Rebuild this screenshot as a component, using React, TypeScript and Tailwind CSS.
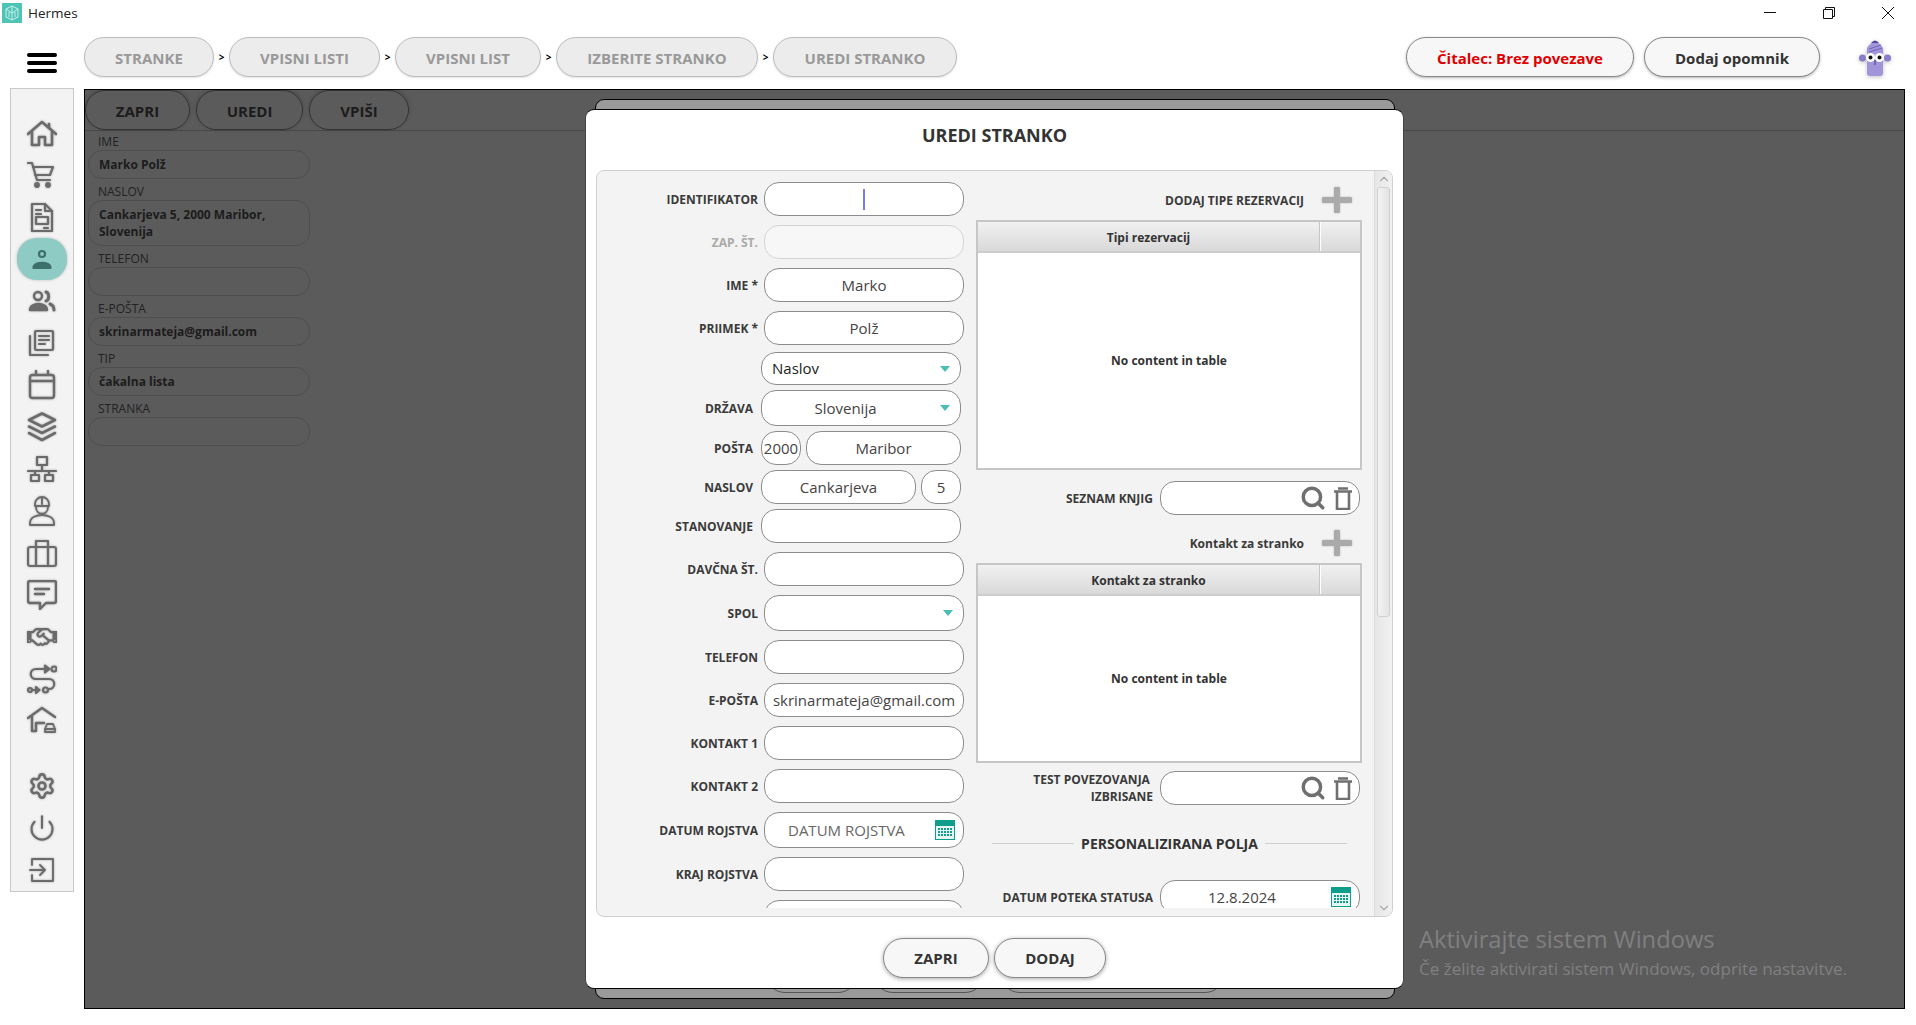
import React from 'react';
import { Search, Settings, Power, ChevronUp, ChevronDown } from 'lucide-react';
import { FaRegHandshake } from 'react-icons/fa';

const Ico: React.FC<{ w?: number; children: React.ReactNode }> = ({ w = 2.2, children }) => (
  <svg width="30" height="30" viewBox="0 0 30 30" fill="none" stroke="currentColor" strokeWidth={w} strokeLinejoin="round" strokeLinecap="round">
    {children}
  </svg>
);

const sideTop: { key: string; node: React.ReactNode; active?: boolean }[] = [
  { key: 'home', node: <Ico w={2.6}><path d="M1 16 15 4l14 12" /><path d="M5 14v13h7v-8h6v8h7V14" /><path d="M22 6v4" /></Ico> },
  { key: 'cart', node: <Ico><path d="M1 3h4l5 17h13" /><path d="M6 7h20l-3 8H8" /><circle cx="10" cy="25" r="1.8" fill="currentColor" /><circle cx="21" cy="25" r="1.8" fill="currentColor" /></Ico> },
  { key: 'doc', node: <Ico><path d="M5 2h13l7 7v20H5z" /><path d="M18 2v7h7" /><path d="M9 8h5M9 12h5M17 26h4" /><rect x="9" y="15" width="12" height="7" /></Ico> },
  { key: 'person', active: true, node: <Ico><circle cx="15" cy="10" r="3" /><path d="M6.5 24c0-7 17-7 17 0z" fill="currentColor" /></Ico> },
  { key: 'people', node: <Ico w={2.4}><circle cx="11" cy="10" r="4" /><path d="M3 24c0-8 17-8 17 0z" fill="currentColor" /><path d="M19 6c3.500 1 3.500 8 0 9" strokeWidth="3" /><path d="M23 18c2.500 1 4 3 4 6" strokeWidth="3" /></Ico> },
  { key: 'docs', node: <Ico><rect x="8" y="3" width="18" height="19" rx="1" /><path d="M12 8h10M12 12h10M12 16h6" /><path d="M3 8v19h18" /></Ico> },
  { key: 'calendar', node: <Ico w={2.4}><rect x="3" y="5" width="24" height="23" rx="2.500" /><path d="M3 11h24M9 1v4M21 1v4" /></Ico> },
  { key: 'layers', node: <Ico w={2.6}><path d="M15 1.500l13 6.500-13 6.500L2 8z" /><path d="M2 14.500l13 6.500 13-6.500" /><path d="M2 21l13 7 13-7" /></Ico> },
  { key: 'network', node: <Ico><rect x="10" y="3" width="10" height="8" /><path d="M15 11v6M1 17h28M8 17v4M22 17v4" /><rect x="4" y="21" width="8" height="6" /><rect x="18" y="21" width="8" height="6" /></Ico> },
  { key: 'worker', node: <Ico w={1.9}><path d="M8 10V8a7 7 0 0 1 14 0v2z" /><path d="M9 11c0 9 12 9 12 0M15 2v6" /><path d="M3 29v-2c0-6 7-8 12-8s12 2 12 8v2z" /></Ico> },
  { key: 'briefcase', node: <Ico><rect x="1" y="9" width="28" height="19" rx="2" /><path d="M9 9V3h12v6M9 9v19M21 9v19" /></Ico> },
  { key: 'chat', node: <Ico w={2.4}><path d="M3 1h24q2 0 2 2v18q0 2-2 2h-8l-6 6v-6H3q-2 0-2-2V3q0-2 2-2z" /><path d="M8 9h14M8 14h9" /></Ico> },
  { key: 'handshake', node: <FaRegHandshake size={30} /> },
  { key: 'route', node: <Ico><path d="M18 5H9c-7 0-7 10 0 10h13c7 0 7 10 0 10h-1" /><path d="M18 1.500l4.500 3.500-4.500 3.500z" fill="currentColor" /><circle cx="27" cy="5" r="2.500" /><circle cx="18.500" cy="26" r="2.500" /><circle cx="3" cy="26" r="2" /><path d="M5 26h7" /><path d="M9 23l3.500 3-3.500 3z" fill="currentColor" /></Ico> },
  { key: 'housecar', node: <Ico w={2.4}><path d="M1 12 15 2l13 9" /><path d="M5 10v15h4v-8h8" /><path d="M18 23l2-5h6l2 5v3H18z" strokeWidth="1.800" /><path d="M18 23h10" strokeWidth="1.800" /></Ico> },
];

const sideBottom: { key: string; node: React.ReactNode }[] = [
  { key: 'gear', node: <Settings size={28} strokeWidth={2.2} /> },
  { key: 'power', node: <Power size={28} strokeWidth={1.8} /> },
  { key: 'exit', node: <Ico w={1.9}><path d="M5 10V4h21v22H5v-6" /><path d="M3 15h15M13 10l5 5-5 5" /></Ico> },
];

const Sidebar: React.FC = () => (
  <div className="ml-[10px] -mt-px mr-[10px] flex h-[804px] w-[64px] shrink-0 flex-col items-center border border-[#c8c8c8] bg-[#f3f3f3] pt-[23px] text-[#6b6b6b]">
    {sideTop.map(i => (
      <div key={i.key} className={i.active
        ? 'flex h-[42px] w-[50px] items-center justify-center rounded-[20px] bg-[#8ecbc4] text-[#3d6f6b] shadow-[0_0_3px_rgba(0,0,0,0.25)]'
        : 'flex h-[42px] w-[50px] items-center justify-center drop-shadow-[0_0_1px_rgba(0,0,0,0.3)]'}>
        {i.node}
      </div>
    ))}
    <div className="h-[23px] shrink-0" />
    {sideBottom.map(i => (
      <div key={i.key} className="flex h-[42px] w-[50px] items-center justify-center drop-shadow-[0_0_1px_rgba(0,0,0,0.3)]">{i.node}</div>
    ))}
  </div>
);

const Crumb: React.FC<{ label: string; w: string }> = ({ label, w }) => (
  <div className={`flex h-[40px] items-center justify-center rounded-[20px] border border-[#bdbdbd] bg-[#ececec] pt-[2px] text-[15px] font-bold text-[#999] shadow-[0_1px_2px_rgba(0,0,0,0.12)] ${w}`}>
    {label}
  </div>
);

const Sep: React.FC = () => (
  <span className="flex h-[40px] w-[15px] items-center justify-center text-[10px] font-bold text-black">&gt;</span>
);

const Avatar: React.FC = () => (
  <svg width="32" height="37" viewBox="0 0 32 37" className="ml-[39px] mt-[2px] drop-shadow-[0_1px_2px_rgba(0,0,0,0.25)]">
    <path d="M8 9 Q16 -3 24 9 V34 Q24 37 21 37 H11 Q8 37 8 34z" fill="#a194d9" />
    <path d="M12 4 Q16 -1 20 4z" fill="#56479c" />
    <path d="M10 10 L22 6 M10 13 L23 9" stroke="#7464b8" strokeWidth="1" />
    <circle cx="3.500" cy="19" r="3.500" fill="#8a7cc9" />
    <circle cx="28.500" cy="19" r="3.500" fill="#8a7cc9" />
    <circle cx="11.500" cy="18.500" r="4.500" fill="#fff" />
    <circle cx="20.500" cy="18.500" r="4.500" fill="#fff" />
    <circle cx="11.500" cy="18.500" r="2" fill="#111" />
    <circle cx="20.500" cy="18.500" r="2" fill="#111" />
    <path d="M16 21v5" stroke="#4a3d8a" strokeWidth="1" />
  </svg>
);

const Header: React.FC = () => (
  <div className="flex h-[59px] items-start pt-[7px]">
    <div className="ml-[27px] mr-[27px] mt-[16px] flex w-[30px] flex-col gap-[4px]">
      <div className="h-[4px] rounded-full bg-black" />
      <div className="h-[4px] rounded-full bg-black" />
      <div className="h-[4px] rounded-full bg-black" />
    </div>
    <Crumb label="STRANKE" w="w-[130px]" />
    <Sep />
    <Crumb label="VPISNI LISTI" w="w-[151px]" />
    <Sep />
    <Crumb label="VPISNI LIST" w="w-[146px]" />
    <Sep />
    <Crumb label="IZBERITE STRANKO" w="w-[202px]" />
    <Sep />
    <Crumb label="UREDI STRANKO" w="w-[184px]" />
    <div className="ml-auto flex h-[40px] w-[228px] items-center justify-center rounded-[20px] border border-[#888] bg-[#f7f7f7] pt-[2px] text-[15px] font-bold text-[#e00000] shadow-[0_1px_3px_rgba(0,0,0,0.3)]">
      Čitalec: Brez povezave
    </div>
    <div className="ml-[10px] flex h-[40px] w-[176px] items-center justify-center rounded-[20px] border border-[#888] bg-[#f7f7f7] pt-[2px] text-[15px] font-bold text-[#333] shadow-[0_1px_3px_rgba(0,0,0,0.3)]">
      Dodaj opomnik
    </div>
    <Avatar />
    <div className="w-[25px]" />
  </div>
);

const TitleBar: React.FC = () => (
  <div className="flex h-[30px] items-start">
    <div className="ml-[2px] mt-[3px] flex h-[20px] w-[20px] items-center justify-center bg-[#4dc4b6]">
      <svg width="16" height="16" viewBox="0 0 16 16" fill="none" stroke="#d8f5f0" strokeWidth="0.900">
        <path d="M8 1l6 3v8l-6 3-6-3V4z" />
        <path d="M8 1v14M2 4l6 4 6-4M5 7v5M11 7v5" />
      </svg>
    </div>
    <span className="ml-[6px] mt-[3px] text-[13.5px] leading-[20px] text-[#222]">Hermes</span>
    <div className="ml-auto mr-[22px] mt-[7px] flex gap-[47px]">
      <svg width="12" height="12" viewBox="0 0 12 12" stroke="#111" fill="none"><path d="M0 5.500h12" /></svg>
      <svg width="12" height="12" viewBox="0 0 12 12" stroke="#111" fill="none"><path d="M.5 2.500h9v9h-9zM2.500 2.500v-2h9v9h-2" /></svg>
      <svg width="12" height="12" viewBox="0 0 12 12" stroke="#111" fill="none"><path d="M0 0l12 12M12 0L0 12" /></svg>
    </div>
  </div>
);

const DetailLabel: React.FC<{ text: string }> = ({ text }) => (
  <div className="h-[21px] pl-[10px] pt-[4px] text-[12px] leading-[17px] text-[#222]">{text}</div>
);

const DetailField: React.FC<{ tall?: boolean; children?: React.ReactNode }> = ({ tall, children }) => (
  <div className={`rounded-[14px] border border-[#4e4e4e] px-[10px] text-[12px] font-bold text-[#1c1c1c] ${tall ? 'h-[46px] py-[5px] leading-[17px]' : 'h-[29px] leading-[27px]'}`}>
    {children}
  </div>
);

const TopBtn: React.FC<{ label: string; w: string }> = ({ label, w }) => (
  <div className={`flex h-[40px] items-center justify-center rounded-[20px] border border-[#333] pt-[2px] text-[15px] font-bold text-[#1c1c1c] shadow-[0_-1px_4px_rgba(0,0,0,0.2)] ${w}`}>
    {label}
  </div>
);

const Caret: React.FC = () => <div className="h-0 w-0 border-x-[5px] border-t-[6px] border-x-transparent border-t-[#4cbdb3]" />;

const CalendarIcon: React.FC = () => (
  <svg width="20" height="20" viewBox="0 0 20 20" className="shrink-0">
    <rect x="0" y="0" width="20" height="20" fill="#0f9d8c" />
    <rect x="1" y="6" width="18" height="13" fill="#e4f5f2" />
    {[8, 11, 14].map(y => [3, 6, 9, 12, 15].map(x => (
      <rect key={`${x}-${y}`} x={x} y={y} width="2" height="2" fill="#0f9d8c" />
    )))}
  </svg>
);

const Field: React.FC<{ w?: string; h?: string; muted?: boolean; children?: React.ReactNode; className?: string }> = ({ w = 'w-[200px]', h = 'h-[34px]', muted, children, className = 'justify-center' }) => (
  <div className={`flex shrink-0 items-center rounded-[15px] border text-[15px] text-[#444] ${w} ${h} ${muted ? 'border-[#d4d4d4] bg-[#f7f7f7]' : 'border-[#8c8c8c] bg-white'} ${className}`}>
    {children}
  </div>
);

const Lbl: React.FC<{ muted?: boolean; children: React.ReactNode }> = ({ muted, children }) => (
  <span className={`text-right text-[12px] font-bold leading-[17px] ${muted ? 'text-[#aaa]' : 'text-[#3a3a3a]'}`}>{children}</span>
);

const RowA: React.FC<{ label?: string; muted?: boolean; children: React.ReactNode }> = ({ label, muted, children }) => (
  <div className="flex items-center justify-end gap-[6px]">
    {label && <Lbl muted={muted}>{label}</Lbl>}
    {children}
  </div>
);

const RowB: React.FC<{ label?: string; children: React.ReactNode }> = ({ label, children }) => (
  <div className="flex items-center justify-end gap-[8px] pr-[3px]">
    {label && <Lbl>{label}</Lbl>}
    {children}
  </div>
);

const Select: React.FC<{ h?: string; text?: string; left?: boolean }> = ({ h = 'h-[33px]', text, left }) => (
  <Field h={h} className="justify-between pl-[10px] pr-[10px]">
    <span className={left ? 'text-[#222]' : 'flex-1 pr-[21px] text-center'}>{text}</span>
    <Caret />
  </Field>
);

const LeftColumn: React.FC = () => (
  <div className="w-[367px] shrink-0 pt-[11px]">
    <div className="flex flex-col gap-[9px]">
      <RowA label="IDENTIFIKATOR"><Field><div className="h-[21px] w-[2px] bg-[#7b7bea]" /></Field></RowA>
      <RowA label="ZAP. ŠT." muted><Field muted /></RowA>
      <RowA label="IME  *"><Field>Marko</Field></RowA>
      <RowA label="PRIIMEK *"><Field>Polž</Field></RowA>
    </div>
    <div className="mt-[7px] flex flex-col gap-[5px]">
      <RowB><Select text="Naslov" left /></RowB>
      <RowB label="DRŽAVA"><Select h="h-[36px]" text="Slovenija" /></RowB>
      <RowB label="POŠTA">
        <div className="flex w-[200px] gap-[5px]">
          <Field w="w-[40px]">2000</Field>
          <Field w="w-[155px]">Maribor</Field>
        </div>
      </RowB>
      <RowB label="NASLOV">
        <div className="flex w-[200px] gap-[5px]">
          <Field w="w-[155px]">Cankarjeva</Field>
          <Field w="w-[40px]">5</Field>
        </div>
      </RowB>
      <RowB label="STANOVANJE"><Field /></RowB>
    </div>
    <div className="mt-[9px] flex flex-col gap-[9px]">
      <RowA label="DAVČNA ŠT."><Field /></RowA>
      <RowA label="SPOL"><Select h="h-[36px]" /></RowA>
      <RowA label="TELEFON"><Field /></RowA>
      <RowA label="E-POŠTA"><Field>skrinarmateja@gmail.com</Field></RowA>
      <RowA label="KONTAKT 1"><Field /></RowA>
      <RowA label="KONTAKT 2"><Field /></RowA>
      <RowA label="DATUM ROJSTVA">
        <Field h="h-[36px]" className="justify-between pl-[23px] pr-[8px]">
          <span className="text-[#666]">DATUM ROJSTVA</span>
          <CalendarIcon />
        </Field>
      </RowA>
      <RowA label="KRAJ ROJSTVA"><Field /></RowA>
      <RowA><Field /></RowA>
    </div>
  </div>
);

const PlusRow: React.FC<{ label: string; mt: string }> = ({ label, mt }) => (
  <div className={`flex h-[26px] items-center justify-end gap-[18px] pr-[10px] ${mt}`}>
    <Lbl>{label}</Lbl>
    <svg width="30" height="26" viewBox="0 0 30 26" className="drop-shadow-[0_0_1px_rgba(0,0,0,0.2)]">
      <path d="M2 13h26M15 2v22" stroke="#aaa" strokeWidth="6" strokeLinecap="round" />
    </svg>
  </div>
);

const EmptyTable: React.FC<{ title: string; h: string; mt: string }> = ({ title, h, mt }) => (
  <div className={`flex flex-col border-2 border-[#c6c6c6] bg-white ${h} ${mt}`}>
    <div className="flex h-[31px] shrink-0 border-b-2 border-[#cdcdcd] bg-gradient-to-b from-[#f1f1f1] to-[#d9d9d9] text-[12px] font-bold text-[#333]">
      <div className="flex flex-1 items-center justify-center border-r border-[#c6c6c6] pt-[2px]">{title}</div>
      <div className="w-[40px] border-l border-white" />
    </div>
    <div className="flex flex-1 items-center justify-center pt-[1px] text-[12px] font-bold text-[#333]">No content in table</div>
  </div>
);

const TrashIcon: React.FC = () => (
  <svg width="18" height="23" viewBox="0 0 18 23" fill="none" stroke="#6f6f6f" strokeWidth="2.600">
    <path d="M0 4.500h18M4 1.500h10" />
    <path d="M3 5v17h12V5" />
  </svg>
);

const LookupField: React.FC = () => (
  <Field className="justify-end gap-[8px] pr-[7px]">
    <Search size={26} strokeWidth={3.2} className="text-[#6f6f6f]" />
    <TrashIcon />
  </Field>
);

const RightColumn: React.FC = () => (
  <div className="ml-[12px] w-[386px] shrink-0">
    <PlusRow label="DODAJ TIPE REZERVACIJ" mt="mt-[16px]" />
    <EmptyTable title="Tipi rezervacij" h="h-[250px]" mt="mt-[7px]" />
    <div className="mt-[11px] flex items-center justify-end gap-[7px] pr-[2px]">
      <Lbl>SEZNAM KNJIG</Lbl>
      <LookupField />
    </div>
    <PlusRow label="Kontakt za stranko" mt="mt-[15px]" />
    <EmptyTable title="Kontakt za stranko" h="h-[200px]" mt="mt-[7px]" />
    <div className="mt-[8px] flex items-center justify-end gap-[7px] pr-[2px]">
      <Lbl>TEST POVEZOVANJA&nbsp;<br />IZBRISANE</Lbl>
      <LookupField />
    </div>
    <div className="mt-[28px] flex h-[20px] items-center justify-between pl-[16px] pr-[15px]">
      <div className="h-px w-[82px] bg-[#cfcfcf]" />
      <span className="text-[14px] font-bold text-[#333]">PERSONALIZIRANA POLJA</span>
      <div className="h-px w-[82px] bg-[#cfcfcf]" />
    </div>
    <div className="mt-[27px] flex items-center justify-end gap-[7px] pr-[2px]">
      <Lbl>DATUM POTEKA STATUSA</Lbl>
      <Field className="justify-between pl-[47px] pr-[8px]">
        <span className="text-[#444]">12.8.2024</span>
        <CalendarIcon />
      </Field>
    </div>
  </div>
);

const ScrollTrack: React.FC = () => (
  <div className="flex w-[18px] shrink-0 flex-col items-center border-l border-[#dcdcdc] bg-gradient-to-r from-[#e6e6e6] to-[#f1f1f1]">
    <div className="flex h-[16px] items-center justify-center text-[#aaa]"><ChevronUp size={14} /></div>
    <div className="h-[430px] w-[13px] rounded-[3px] border border-[#d0d0d0] bg-gradient-to-r from-[#f2f2f2] to-[#e4e4e4]" />
    <div className="flex-1" />
    <div className="flex h-[16px] items-center justify-center text-[#aaa]"><ChevronDown size={14} /></div>
  </div>
);

const ModalBtn: React.FC<{ label: string; w: string }> = ({ label, w }) => (
  <div className={`flex h-[40px] items-center justify-center rounded-[20px] border border-[#888] bg-[#f7f7f7] text-[15px] font-bold text-[#333] shadow-[0_1px_4px_rgba(0,0,0,0.35)] ${w}`}>
    {label}
  </div>
);

const Modal: React.FC = () => (
  <div className="absolute left-[500px] top-[19px] flex h-[880px] w-[819px] flex-col rounded-[9px] border-y border-y-black border-x border-x-[#444] bg-white">
    <div className="flex h-[60px] shrink-0 items-center justify-center pb-[10px] text-[18px] font-bold text-[#333]">UREDI STRANKO</div>
    <div className="mx-[10px] flex h-[747px] shrink-0 overflow-hidden rounded-[8px] border border-[#d0d0d0] bg-[#f3f3f3]">
      <div className="flex h-[737px] flex-1 overflow-hidden">
        <LeftColumn />
        <RightColumn />
      </div>
      <ScrollTrack />
    </div>
    <div className="flex justify-center gap-[5px] pt-[21px]">
      <ModalBtn label="ZAPRI" w="w-[106px]" />
      <ModalBtn label="DODAJ" w="w-[112px]" />
    </div>
  </div>
);

const MainPanel: React.FC = () => (
  <div className="relative h-[920px] w-[1821px] shrink-0 overflow-hidden border border-black bg-[#5b5b5b]">
    <div className="flex h-[41px] gap-[6px] border-b border-[#484848]">
      <TopBtn label="ZAPRI" w="w-[105px]" />
      <TopBtn label="UREDI" w="w-[107px]" />
      <TopBtn label="VPIŠI" w="w-[100px]" />
    </div>
    <div className="-mt-[2px] ml-[3px] w-[222px]">
      <DetailLabel text="IME" />
      <DetailField>Marko Polž</DetailField>
      <DetailLabel text="NASLOV" />
      <DetailField tall>Cankarjeva 5, 2000 Maribor, Slovenija</DetailField>
      <DetailLabel text="TELEFON" />
      <DetailField />
      <DetailLabel text="E-POŠTA" />
      <DetailField>skrinarmateja@gmail.com</DetailField>
      <DetailLabel text="TIP" />
      <DetailField>čakalna lista</DetailField>
      <DetailLabel text="STRANKA" />
      <DetailField />
    </div>

    {/* sheet that sits behind the dialog */}
    <div className="absolute left-[510px] top-[9px] flex h-[900px] w-[800px] items-end rounded-[9px] border border-black bg-[#9a9a9a] pb-[5px] pl-[169px]">
      <div className="h-[40px] w-[93px] rounded-[20px] border border-[#555]" />
      <div className="ml-[15px] h-[40px] w-[112px] rounded-[20px] border border-[#555]" />
      <div className="ml-[15px] h-[40px] w-[225px] rounded-[20px] border border-[#555]" />
    </div>

    <Modal />

    <div className="absolute left-[1334px] top-[833px] text-[#808080]">
      <div className="text-[23.7px] leading-[32px]">Aktivirajte sistem Windows</div>
      <div className="text-[17px] leading-[27px]">Če želite aktivirati sistem Windows, odprite nastavitve.</div>
    </div>
  </div>
);

export default function App() {
  return (
    <div className="h-[1025px] w-[1916px] overflow-hidden bg-white font-['Open_Sans',sans-serif]">
      <TitleBar />
      <Header />
      <div className="flex items-start">
        <Sidebar />
        <MainPanel />
      </div>
    </div>
  );
}
